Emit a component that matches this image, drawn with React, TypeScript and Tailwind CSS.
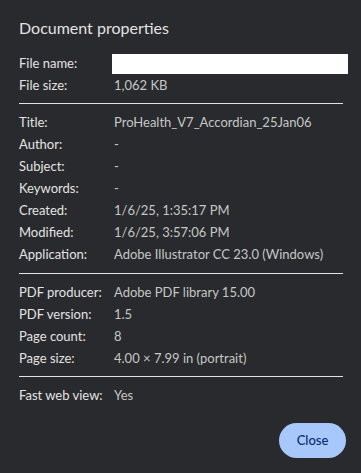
import React from "react";

const font = { fontFamily: 'Lato, "Noto Sans", sans-serif' };

function Row({ label, value }: { label: string; value: React.ReactNode }) {
  return (
    <div className="flex h-[22px] items-center pt-[2px] text-[13px]">
      <div className="w-[95px] shrink-0 text-[#e3e3e3]">{label}</div>
      <div className="text-[#c4c7c5] whitespace-nowrap">{value}</div>
    </div>
  );
}

export default function App() {
  return (
    <div className="h-[473px] w-[361px] overflow-hidden bg-[#292a2d] pl-[19px]" style={font}>
      <div className="pt-[16px] h-[40px] text-[16px] leading-[24px] text-[#e3e3e3]">Document properties</div>
      <div className="mt-[12px]">
        <div className="flex h-[22px] items-center text-[13px]">
          <div className="w-[93px] shrink-0 pt-[2px] text-[#e3e3e3]">File name:</div>
          <div className="mt-[1px] h-[20px] w-[236px] bg-white" />
        </div>
        <Row label="File size:" value="1,062 KB" />
      </div>
      <div className="my-[7px] h-px w-[324px] bg-[#e3e3e3]" />
      <div>
        <Row label="Title:" value="ProHealth_V7_Accordian_25Jan06" />
        <Row label="Author:" value="-" />
        <Row label="Subject:" value="-" />
        <Row label="Keywords:" value="-" />
        <Row label="Created:" value="1/6/25, 1:35:17 PM" />
        <Row label="Modified:" value="1/6/25, 3:57:06 PM" />
        <Row label="Application:" value="Adobe Illustrator CC 23.0 (Windows)" />
      </div>
      <div className="mt-[8px] mb-[7px] h-px w-[324px] bg-[#e3e3e3]" />
      <div>
        <Row label="PDF producer:" value="Adobe PDF library 15.00" />
        <Row label="PDF version:" value="1.5" />
        <Row label="Page count:" value="8" />
        <Row label="Page size:" value="4.00 × 7.99 in (portrait)" />
      </div>
      <div className="my-[7px] h-px w-[324px] bg-[#e3e3e3]" />
      <Row label="Fast web view:" value="Yes" />
      <div className="mt-[17px] flex justify-end pr-[15px]">
        <button className="h-[35px] w-[67px] rounded-full bg-[#a8c7fa] text-[13px] font-medium text-[#062e6f]">
          Close
        </button>
      </div>
    </div>
  );
}
